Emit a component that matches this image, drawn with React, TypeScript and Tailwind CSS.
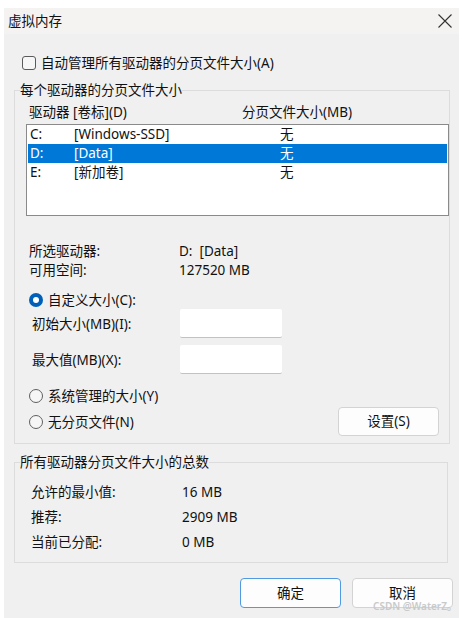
const FONT = { fontFamily: '"Noto Sans", "Noto Sans CJK SC", sans-serif' };

interface Drive {
  letter: string;
  label: string;
  size: string;
  selected: boolean;
}

const DRIVES: Drive[] = [
  { letter: 'C:', label: '[Windows-SSD]', size: '无', selected: false },
  { letter: 'D:', label: '[Data]', size: '无', selected: true },
  { letter: 'E:', label: '[新加卷]', size: '无', selected: false },
];

const TOTALS = [
  { label: '允许的最小值:', value: '16 MB' },
  { label: '推荐:', value: '2909 MB' },
  { label: '当前已分配:', value: '0 MB' },
];

function Radio({ checked }: { checked: boolean }) {
  return checked ? (
    <span className="flex h-[14px] w-[14px] shrink-0 items-center justify-center rounded-full bg-[#005fb8]">
      <span className="h-[6px] w-[6px] rounded-full bg-white" />
    </span>
  ) : (
    <span className="h-[14px] w-[14px] shrink-0 rounded-full border border-[#5f5f5f] bg-[#f6f6f6]" />
  );
}

function Button({ label, primary }: { label: string; primary?: boolean }) {
  return (
    <div
      className={`flex h-[30px] w-[101px] items-center justify-center rounded-[4px] border bg-[#fdfdfd] text-[13.5px] ${
        primary ? 'border-[#4f9ae0]' : 'border-[#d3d3d3]'
      }`}
    >
      {label}
    </div>
  );
}

export default function App() {
  return (
    <div className="h-[618px] w-[462px] overflow-hidden bg-white text-[#111] text-[13.5px]" style={FONT}>
      <div className="relative ml-[4px] mt-[8px] flex h-[610px] w-[455px] flex-col bg-[#f0f0f0]">
        {/* Title bar */}
        <div className="flex h-[26px] items-center justify-between bg-[#f4f3f1] pl-[4px] pr-[7px]">
          <span className="leading-[18px]">虚拟内存</span>
          <svg width="14" height="14" viewBox="0 0 14 14">
            <path d="M0.5 0.5 L13.5 13.5 M13.5 0.5 L0.5 13.5" stroke="#333" strokeWidth="1.1" />
          </svg>
        </div>

        {/* Auto manage */}
        <div className="ml-[18px] mt-[20px] flex h-[18px] items-center gap-[5px]">
          <span className="h-[14px] w-[14px] rounded-[3px] border border-[#5a5a5a] bg-[#f6f6f6]" />
          <span className="leading-[18px]">自动管理所有驱动器的分页文件大小(A)</span>
        </div>

        {/* Per-drive group */}
        <fieldset className="ml-[10px] mt-[9px] w-[434px] border border-[#dcdcdc] pb-[7px]">
          <legend className="ml-[5px] leading-[18px]">每个驱动器的分页文件大小</legend>

          <div className="mt-[4px] flex h-[18px] items-center leading-[18px]">
            <span className="ml-[14px] w-[213px]">驱动器 [卷标](D)</span>
            <span>分页文件大小(MB)</span>
          </div>

          <div className="ml-[11px] mt-[3px] h-[92px] w-[423px] border border-[#8a8a8a] bg-white px-[1px]">
            {DRIVES.map((d) => (
              <div
                key={d.letter}
                className={`flex h-[19px] items-center leading-[19px] ${
                  d.selected ? 'bg-[#0078d7] text-white' : ''
                }`}
              >
                <span className="ml-[2px] w-[44px]">{d.letter}</span>
                <span className="w-[206px]">{d.label}</span>
                <span>{d.size}</span>
              </div>
            ))}
          </div>

          <div className="ml-[14px] mt-[26px] flex h-[19px] items-center leading-[19px]">
            <span className="w-[150px]">所选驱动器:</span>
            <span>D:&nbsp;&nbsp;[Data]</span>
          </div>
          <div className="ml-[14px] flex h-[19px] items-center leading-[19px]">
            <span className="w-[150px]">可用空间:</span>
            <span>127520 MB</span>
          </div>

          <div className="ml-[14px] mt-[11px] flex h-[18px] items-center gap-[5px] leading-[18px]">
            <Radio checked />
            <span>自定义大小(C):</span>
          </div>

          <div className="ml-[17px] flex items-center">
            <span className="w-[148px] leading-[18px]">初始大小(MB)(I):</span>
            <div className="h-[29px] w-[102px] rounded-[2px] border-b border-[#c2c2c2] bg-white" />
          </div>
          <div className="ml-[17px] mt-[7px] flex items-center">
            <span className="w-[148px] leading-[18px]">最大值(MB)(X):</span>
            <div className="h-[29px] w-[102px] rounded-[2px] border-b border-[#c2c2c2] bg-white" />
          </div>

          <div className="ml-[14px] mt-[13px] flex h-[18px] items-center gap-[5px] leading-[18px]">
            <Radio checked={false} />
            <span>系统管理的大小(Y)</span>
          </div>

          <div className="ml-[14px] mr-[10px] mt-[2px] flex items-center justify-between">
            <div className="flex h-[18px] items-center gap-[5px] leading-[18px]">
              <Radio checked={false} />
              <span>无分页文件(N)</span>
            </div>
            <div className="flex h-[29px] w-[101px] items-center justify-center rounded-[4px] border border-[#d3d3d3] bg-[#fdfdfd]">
              设置(S)
            </div>
          </div>
        </fieldset>

        {/* Totals group */}
        <fieldset className="ml-[10px] mt-[9px] w-[434px] border border-[#dcdcdc] pb-[7px]">
          <legend className="ml-[5px] leading-[18px]">所有驱动器分页文件大小的总数</legend>
          <div className="mt-[9px]">
            {TOTALS.map((t) => (
              <div key={t.label} className="ml-[16px] flex h-[25px] items-center leading-[25px]">
                <span className="w-[151px]">{t.label}</span>
                <span>{t.value}</span>
              </div>
            ))}
          </div>
        </fieldset>

        {/* Footer buttons */}
        <div className="mr-[6px] mt-[15px] flex justify-end gap-[11px]">
          <Button label="确定" primary />
          <Button label="取消" />
        </div>

        {/* Watermark */}
        <span className="absolute left-[369px] top-[592px] text-[10px] font-semibold leading-[12px] text-[#c9c9c9]">
          CSDN @WaterZ。
        </span>
      </div>
    </div>
  );
}
